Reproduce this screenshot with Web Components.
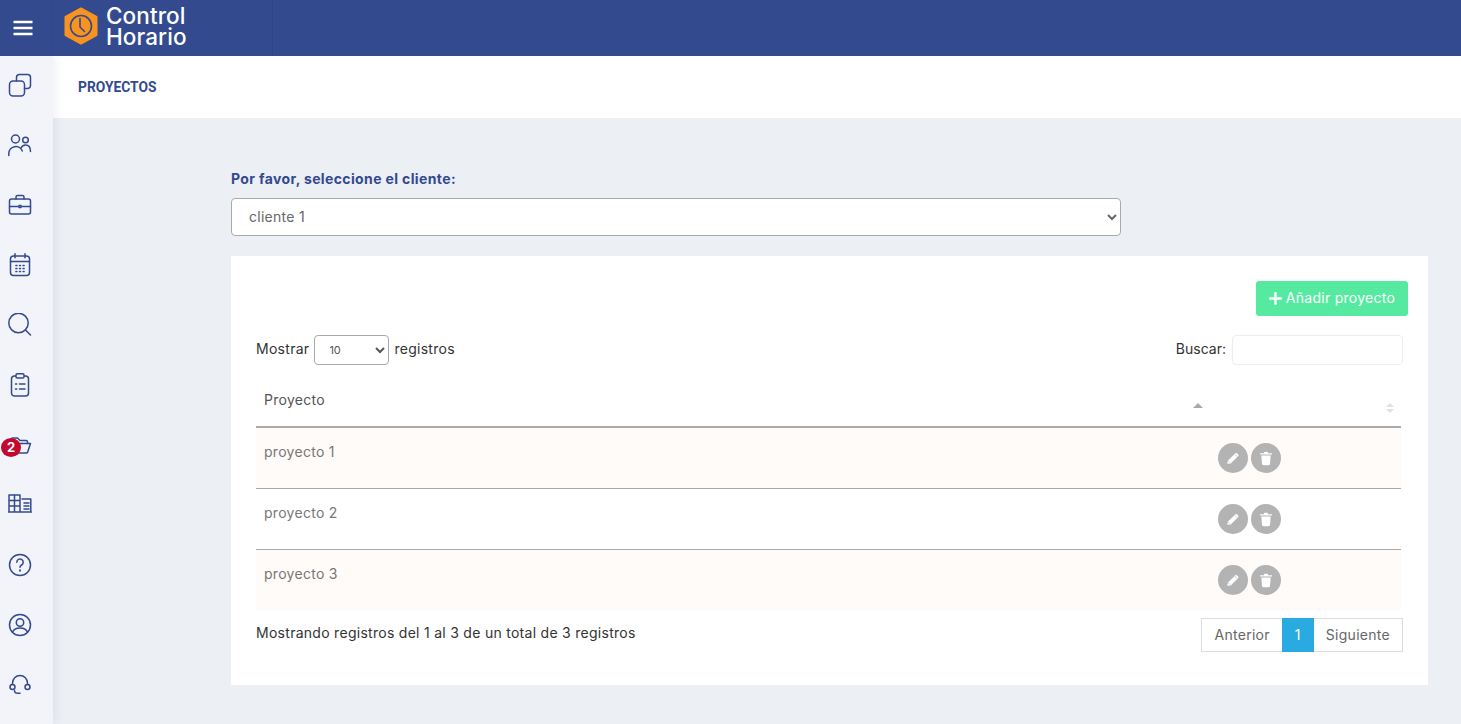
<!DOCTYPE html>
<html lang="es">
<head>
<meta charset="utf-8">
<title>Proyectos</title>
<style>
  html, body { margin: 0; height: 100%; }
  body { font-family: Inter, "Noto Sans", sans-serif; overflow: hidden; }
</style>
</head>
<body>
<app-shell>
  <top-bar></top-bar>
  <side-nav></side-nav>
  <page-title>PROYECTOS</page-title>
  <client-picker label="Por favor, seleccione el cliente:" value="cliente 1"></client-picker>
  <projects-card>
    <project-row name="proyecto 1" odd></project-row>
    <project-row name="proyecto 2"></project-row>
    <project-row name="proyecto 3" odd></project-row>
  </projects-card>
</app-shell>

<script>
  const BLUE = "#334a8f";

  class appShell extends HTMLElement {
    constructor() {
      super();
      this.attachShadow({ mode: "open" });
      this.shadowRoot.innerHTML = `
        <style>
          :host { display: grid; grid-template-columns: 53px 1fr; grid-template-rows: 56px 62px 1fr; height: 100vh; background: #eceff4; }
          ::slotted(top-bar) { grid-column: 1 / 3; }
          ::slotted(side-nav) { grid-row: 2 / 4; }
          .content { grid-column: 2; padding: 52px 33px 0 178px; min-width: 0; }
        </style>
        <slot></slot>
        <div class="content"><slot name="content"></slot></div>
      `;
    }
    connectedCallback() {
      // title stays in the grid, picker and card go in the content column
      this.querySelectorAll("client-picker, projects-card").forEach((el) => el.setAttribute("slot", "content"));
    }
  }

  class topBar extends HTMLElement {
    constructor() {
      super();
      this.attachShadow({ mode: "open" });
      this.shadowRoot.innerHTML = `
        <style>
          :host { display: flex; height: 56px; background: ${BLUE}; position: relative; z-index: 2; color: #fff; }
          .burger { width: 53px; box-sizing: border-box; padding-right: 6px; display: flex; align-items: center; justify-content: center; border-right: 1px solid #31478a; }
          .burger svg { display: block; }
          .brand { width: 220px; box-sizing: border-box; padding: 0 0 4px 10px; display: flex; align-items: center; gap: 7px; border-right: 1px solid #2f4586; }
          .name { font-family: Inter, sans-serif; font-size: 22.500px; line-height: 21px; font-weight: 500; letter-spacing: .1px; }
        </style>
        <div class="burger">
          <svg width="20" height="16" viewBox="0 0 20 16"><path d="M.5 2h19M.5 8h19M.5 14h19" stroke="#fff" stroke-width="2.400"/></svg>
        </div>
        <div class="brand">
          <svg width="36" height="38" viewBox="0 0 36 38">
            <path d="M18 1.500 33.500 10v18L18 36.500 2.500 28V10z" fill="#f7931e" stroke="#f7931e" stroke-width="2" stroke-linejoin="round"/>
            <circle cx="18" cy="19" r="10.500" fill="none" stroke="${BLUE}" stroke-width="1.600"/>
            <path d="M17 11.500V20l4.500 4.500" fill="none" stroke="${BLUE}" stroke-width="1.600" stroke-linecap="round"/>
          </svg>
          <div class="name">Control<br>Horario</div>
        </div>
      `;
    }
  }

  const NAV_ICONS = [
    `<rect x="1.500" y="8" width="15" height="15" rx="3.500"/><path d="M8.500 8V4.500a3 3 0 0 1 3-3h8a3 3 0 0 1 3 3v8a3 3 0 0 1-3 3h-3"/>`,
    `<circle cx="7.500" cy="6" r="4"/><circle cx="17.500" cy="7" r="2.800"/><path d="M.8 22.500v-2a7 7 0 0 1 13.500-2.500M13 15a5 5 0 0 1 4.500-3c3 0 5 2.200 5 6.500"/>`,
    `<rect x="1.500" y="6" width="21" height="15" rx="2"/><path d="M1.500 13.500h8.500M14 13.500h8.500M8 6V4a1.500 1.500 0 0 1 1.500-1.500h5A1.500 1.500 0 0 1 16 4v2"/><rect x="11" y="12.500" width="2" height="2"/>`,
    `<rect x="2.500" y="3" width="19" height="19.500" rx="3"/><path d="M2.500 8.500h19M7 .8v4M17 .8v4"/><path d="M8 12.500h.8M11.600 12.500h.8M15.200 12.500h.8M8 15.500h.8M11.600 15.500h.8M15.200 15.500h.8M8 18.500h.8M11.600 18.500h.8M15.200 18.500h.8" stroke-width="1.700"/>`,
    `<circle cx="10.500" cy="10" r="9.700"/><path d="M17.500 17l5 5"/>`,
    `<rect x="3.500" y="3" width="17" height="20" rx="3"/><rect x="8" y=".8" width="8" height="4.200" rx="1.200" fill="#f2f4f9"/><path d="M7.500 11h1.200M7.500 16h1.200M11.500 11h5.500M11.500 16h5.500"/>`,
    `<path d="M3 19V6.500A1.500 1.500 0 0 1 4.500 5h5l2.500 2.500h6A1.500 1.500 0 0 1 19.500 9v1.500"/><path d="M6.500 10.500H22.500l-2.800 8.500a1.500 1.500 0 0 1-1.400 1H3z"/>`,
    `<path d="M1 19V2h11v17M1 7.500h11M1 13h11M6.500 2v17M.5 19h23M14 6h8.800v13M16 10h5M16 13h5M16 16h5"/>`,
    `<circle cx="12" cy="12" r="10.500"/><path d="M8.800 9.200a3.200 3.200 0 1 1 4.800 2.800c-1 .6-1.600 1.200-1.600 2.300"/><path d="M12 17.200v.6" stroke-width="1.900"/>`,
    `<circle cx="12" cy="12" r="10.500"/><circle cx="12" cy="9.500" r="3.700"/><path d="M4.500 19.200c1-3 4-4.300 7.500-4.300s6.500 1.300 7.500 4.300"/>`,
    `<path d="M4.500 11.500V10a7.500 7.500 0 0 1 15 0v1.500"/><circle cx="4.500" cy="14" r="2.500"/><circle cx="19.500" cy="14" r="2.500"/><path d="M6.500 17.500c0 2 1.500 2.800 3.500 2.800h2"/>`
  ];

  class sideNav extends HTMLElement {
    constructor() {
      super();
      this.attachShadow({ mode: "open" });
      const items = NAV_ICONS.map((icon, i) => `
        <div class="item">
          <svg width="24" height="24" viewBox="0 0 24 24" fill="none" stroke="${BLUE}" stroke-width="1.500" stroke-linecap="round" stroke-linejoin="round">${icon}</svg>
          ${i === 6 ? `<span class="badge">2</span>` : ""}
        </div>`).join("");
      this.shadowRoot.innerHTML = `
        <style>
          :host { display: block; background: #f2f4f9; box-shadow: 2px 0 10px rgba(40,50,80,.08); position: relative; z-index: 1; }
          .item { height: 60px; display: flex; align-items: center; padding-left: 8px; position: relative; }
          .item svg { display: block; }
          .badge { position: absolute; left: 1px; top: 23px; width: 20px; height: 19px; border-radius: 50%; background: #c4082f; color: #fff; font: 700 13px/19px Inter, sans-serif; text-align: center; }
          .list { margin-top: -1px; }
        </style>
        <div class="list">${items}</div>
      `;
    }
  }

  class pageTitle extends HTMLElement {
    constructor() {
      super();
      this.attachShadow({ mode: "open" });
      this.shadowRoot.innerHTML = `
        <style>
          :host { display: flex; align-items: center; background: #fff; padding: 1px 0 0 25px; color: ${BLUE}; font: 700 13.800px/1 Roboto, sans-serif; height: 62px; box-sizing: border-box; }
        </style>
        <slot></slot>
      `;
    }
  }

  class clientPicker extends HTMLElement {
    constructor() {
      super();
      this.attachShadow({ mode: "open" });
    }
    connectedCallback() {
      const value = this.getAttribute("value");
      this.shadowRoot.innerHTML = `
        <style>
          :host { display: block; margin-bottom: 20px; }
          label { display: block; color: ${BLUE}; font: 700 14px/18px Inter, sans-serif; letter-spacing: .37px; margin-bottom: 10px; }
          select { display: block; width: 890px; height: 38px; box-sizing: border-box; background: #fff; border: 1px solid #aaa; border-radius: 4px; padding: 0 0 2px 13px; font: 400 14px Inter, sans-serif; letter-spacing: .28px; color: #666; }
        </style>
        <label>${this.getAttribute("label")}</label>
        <select><option>${value}</option><option>cliente 2</option></select>
      `;
    }
  }

  class projectsCard extends HTMLElement {
    constructor() {
      super();
      this.attachShadow({ mode: "open" });
      this.shadowRoot.innerHTML = `
        <style>
          :host { display: block; background: #fff; padding: 25px 20px 33px 25px; height: 429px; box-sizing: border-box; font: 400 14px/18px Inter, sans-serif; letter-spacing: .28px; color: #333; }
          .actions { display: flex; justify-content: flex-end; margin-bottom: 19px; }
          .add { display: flex; align-items: center; justify-content: center; gap: 4px; width: 152px; height: 35px; border: 0; border-radius: 3px; background: #55eaa0; color: #fff; font: 400 14px Inter, sans-serif; letter-spacing: .28px; padding: 0 0 3px; }
          .add svg { margin-top: 2px; }
          .controls { display: flex; justify-content: space-between; align-items: center; height: 30px; padding-right: 5px; }
          .left, .right { display: flex; align-items: center; gap: 4px; line-height: 28px; padding-bottom: 2px; }
          .left { gap: 5px; }
          .right { letter-spacing: 0; }
          .left select { width: 75px; height: 30px; box-sizing: border-box; background: #fff; border: 1px solid #aaa; border-radius: 4px; font: 400 11px Inter, sans-serif; color: #555; padding-left: 10px; margin-bottom: -2px; }
          .right input { width: 171px; height: 30px; box-sizing: border-box; border: 1px solid #eee; border-radius: 4px; margin: 0 0 -2px 2px; background: #fff; }
          .head { display: grid; grid-template-columns: 953px 192px; height: 63px; box-sizing: border-box; border-bottom: 2px solid #aaa; width: 1145px; color: #555; }
          .head .name { padding: 26px 0 0 8px; }
          .sort { position: relative; }
          .up { width: 0; height: 0; border: 5px solid transparent; border-top: 0; border-bottom: 5px solid #aaa; position: absolute; }
          .one { right: 6px; top: 38px; }
          .col2 { position: relative; }
          .col2 .u2 { width: 0; height: 0; border: 4.500px solid transparent; border-top: 0; border-bottom: 4.500px solid #e2e2e2; position: absolute; right: 7px; top: 38px; }
          .col2 .d2 { width: 0; height: 0; border: 4.500px solid transparent; border-bottom: 0; border-top: 4.500px solid #e2e2e2; position: absolute; right: 7px; top: 44px; }
          .rows { width: 1145px; }
          .foot { display: flex; justify-content: space-between; align-items: flex-start; margin-top: 8px; width: 1147px; }
          .info { padding-top: 6px; }
          .pager { display: flex; height: 34px; box-sizing: border-box; border: 1px solid #ddd; color: #666; }
          .pager span { display: flex; align-items: center; padding: 0 12px 1px; }
          .pager .on { background: #29abe2; color: #fff; width: 32px; box-sizing: border-box; justify-content: center; padding: 0; margin: -1px 0; }
        </style>
        <div class="actions">
          <button class="add">
            <svg width="13" height="13" viewBox="0 0 13 13"><path d="M6.500 1v11M1 6.500h11" stroke="#fff" stroke-width="2.400" stroke-linecap="round"/></svg>
            Añadir proyecto
          </button>
        </div>
        <div class="controls">
          <div class="left">Mostrar <select><option>10</option><option>25</option></select> registros</div>
          <div class="right">Buscar: <input type="text"></div>
        </div>
        <div class="head">
          <div class="name sort">Proyecto<i class="up one"></i></div>
          <div class="col2"><i class="u2"></i><i class="d2"></i></div>
        </div>
        <div class="rows"><slot></slot></div>
        <div class="foot">
          <div class="info">Mostrando registros del 1 al 3 de un total de 3 registros</div>
          <div class="pager"><span>Anterior</span><span class="on">1</span><span>Siguiente</span></div>
        </div>
      `;
    }
  }

  class projectRow extends HTMLElement {
    constructor() {
      super();
      this.attachShadow({ mode: "open" });
    }
    connectedCallback() {
      this.shadowRoot.innerHTML = `
        <style>
          :host { display: grid; grid-template-columns: 953px 192px; height: 61px; box-sizing: border-box; border-bottom: 1px solid #aaa; color: #777; }
          :host([odd]) { background: #fffbf8; }
          :host(:last-child) { border-bottom: 0; height: 60px; }
          .name { padding: 15px 0 0 8px; }
          .btns { display: flex; gap: 3px; padding: 15px 0 0 9px; }
          .btn { width: 30px; height: 30px; border-radius: 50%; background: #b3b3b3; display: flex; align-items: center; justify-content: center; }
          svg { display: block; }
        </style>
        <div class="name">${this.getAttribute("name")}</div>
        <div class="btns">
          <div class="btn">
            <svg width="14" height="14" viewBox="0 0 14 14"><path d="M1.200 12.800l.8-3.200 7.400-7.400a1 1 0 0 1 1.400 0l1.400 1.400a1 1 0 0 1 0 1.400l-7.400 7.400z" fill="#fff"/><path d="M8.700 3l2.300 2.300M2.200 9.800l2 2" stroke="#b3b3b3" stroke-width=".6"/></svg>
          </div>
          <div class="btn">
            <svg width="14" height="15" viewBox="0 0 14 15"><path d="M1.500 2.300h11a.6.6 0 0 1 0 1.300h-11a.6.6 0 0 1 0-1.300zM5 2.300V1.500a.8.8 0 0 1 .8-.8h2.400a.8.8 0 0 1 .8.800v.8z" fill="#fff"/><path d="M2.300 4.600h9.400l-.7 8.500a1.200 1.200 0 0 1-1.200 1.100H4.200A1.200 1.200 0 0 1 3 13.100z" fill="#fff"/></svg>
          </div>
        </div>
      `;
    }
  }

  customElements.define("app-shell", appShell);
  customElements.define("top-bar", topBar);
  customElements.define("side-nav", sideNav);
  customElements.define("page-title", pageTitle);
  customElements.define("client-picker", clientPicker);
  customElements.define("projects-card", projectsCard);
  customElements.define("project-row", projectRow);
</script>
</body>
</html>
